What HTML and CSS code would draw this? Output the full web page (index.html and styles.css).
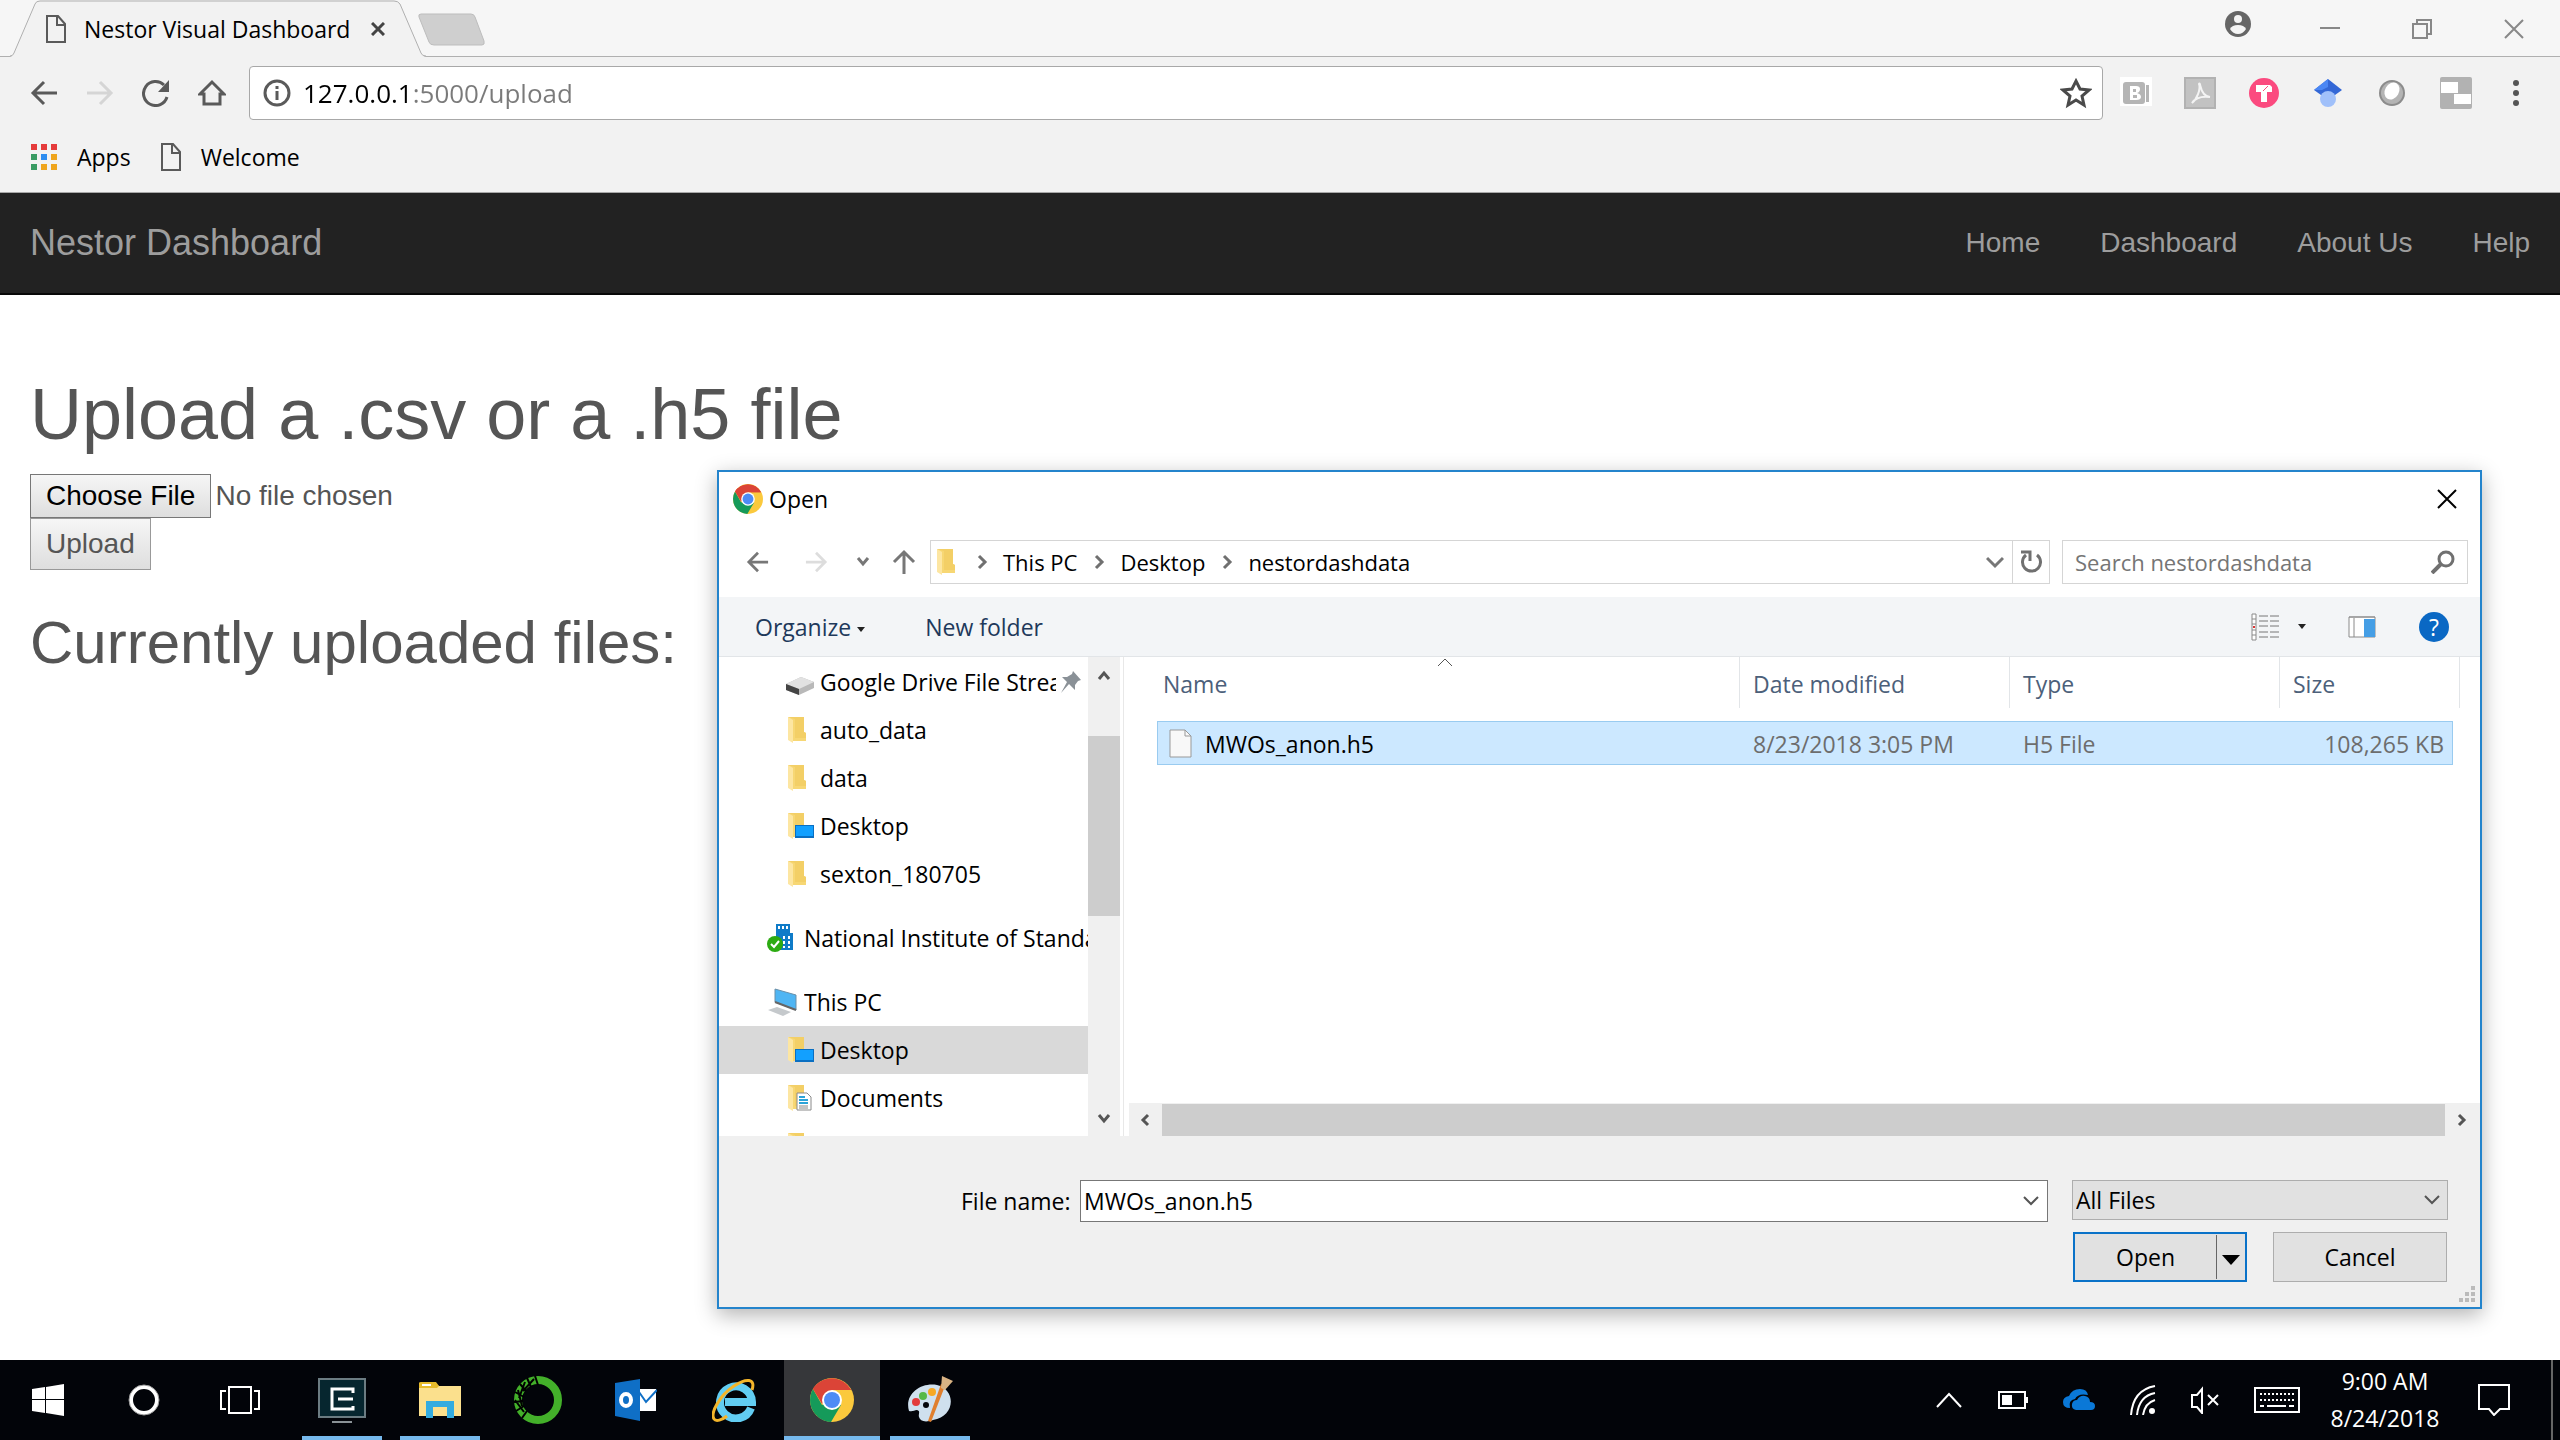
FILE: index.html
```html
<!DOCTYPE html>
<html lang="en">
<head>
  <meta charset="utf-8">
  <title>Nestor Visual Dashboard</title>
  <link rel="stylesheet" href="styles.css">
</head>
<body>
  <!-- shared icons -->
  <svg class="sprite" aria-hidden="true">
    <symbol id="doc" viewBox="0 0 20 28">
      <path d="M1 1h11l7 8v18H1zM11 1v9h8" fill="none" stroke="#5a5a5a" stroke-width="2"/>
    </symbol>
    <symbol id="folder" viewBox="0 0 28 28">
      <path d="M2 1h16v15l2 1v8H6z" fill="#f7d774"/>
      <path d="M2 1h16v15l2 1v5H9V3z" fill="#f3cf66"/>
      <path d="M2 1l5 3v23l-5-3z" fill="#fde6a2"/>
    </symbol>
    <symbol id="folder-desktop" viewBox="0 0 28 28">
      <use href="#folder"/>
      <path d="M9 13h19v13H9z" fill="#0a6fc2"/>
      <path d="M10 14h17v10H10z" fill="#12a0ff"/>
    </symbol>
    <symbol id="chrome" viewBox="0 0 44 44">
      <circle cx="22" cy="22" r="22" fill="#fbc93d"/>
      <path d="M22 22L3 11A22 22 0 0 1 41 12H22z" fill="#db4437"/>
      <path d="M3 11A22 22 0 0 0 21 44L31 27 22 22 12 27z" fill="#159a5a"/>
      <path d="M3 11A22 22 0 0 1 41 12H22L12 26z" fill="#db4437"/>
      <circle cx="22" cy="22" r="10" fill="#fff"/>
      <circle cx="22" cy="22" r="8" fill="#4d8bf5"/>
    </symbol>
    <symbol id="chev" viewBox="0 0 12 16">
      <path d="M2 2l6 6-6 6" fill="none" stroke="#707070" stroke-width="3"/>
    </symbol>
    <symbol id="arrow" viewBox="0 0 24 24">
      <path d="M23 12H3M12 2L2 12l10 10" fill="none" stroke="currentColor" stroke-width="3"/>
    </symbol>
    <symbol id="combo" viewBox="0 0 16 16">
      <path d="M1 4l7 7 7-7" fill="none" stroke="#555" stroke-width="2"/>
    </symbol>
    <symbol id="cross" viewBox="0 0 20 20">
      <path d="M1 1l18 18M19 1L1 19" fill="none" stroke="currentColor" stroke-width="2"/>
    </symbol>
  </svg>

  <!-- browser window -->
  <header class="browser">
    <div class="tabstrip">
      <div class="tab">
        <svg class="tab-shape" viewBox="0 0 416 57"><path d="M0 57Q3 56 4 53L25 4Q26 0 30 0H384Q388 0 390 4L411 53Q412 56 416 57z" fill="#f2f2f2"/><path d="M0 56Q3 56 4 53L25 4Q26 1 30 1H384Q388 1 390 4L411 53Q412 56 416 56" fill="none" stroke="#b0b0b0"/></svg>
        <svg class="doc-icon"><use href="#doc"/></svg>
        <span class="tab-title">Nestor Visual Dashboard</span>
        <button class="tab-close" aria-label="Close tab"><svg width="14" height="14" viewBox="0 0 14 14"><path d="M1 1l12 12M13 1L1 13" stroke="#444" stroke-width="3"/></svg></button>
      </div>
      <button class="new-tab" aria-label="New tab"><svg width="68" height="34" viewBox="0 0 68 34"><path d="M3 1h50q3 0 4 3l9 24q1 4-2 4H16q-4 0-5-3L1 4q-1-3 2-3z" fill="#cfcfcf" stroke="#bdbdbd"/></svg></button>
      <div class="window-buttons">
        <button aria-label="Profile"><svg width="26" height="26" viewBox="0 0 26 26"><circle cx="13" cy="13" r="13" fill="#666"/><circle cx="13" cy="8" r="4" fill="#f5f5f5"/><path d="M5 18q2-4 8-4t8 4q-3 5-8 5t-8-5z" fill="#f5f5f5"/></svg></button>
        <button aria-label="Minimize"><svg width="20" height="20" viewBox="0 0 20 20"><path d="M0 9h20" stroke="#888" stroke-width="2"/></svg></button>
        <button aria-label="Restore"><svg width="20" height="20" viewBox="0 0 20 20"><path d="M1 5h14v14H1zM5 5V1h14v14h-4" fill="none" stroke="#888" stroke-width="2"/></svg></button>
        <button class="window-close" aria-label="Close"><svg width="20" height="20"><use href="#cross"/></svg></button>
      </div>
    </div>

    <div class="toolbar">
      <button aria-label="Back"><svg width="28" height="26" viewBox="0 0 28 26"><path d="M27 13H3M14 2L3 13l11 11" fill="none" stroke="#5a5a5a" stroke-width="3"/></svg></button>
      <button aria-label="Forward"><svg width="28" height="26" viewBox="0 0 28 26"><path d="M1 13h24M14 2l11 11-11 11" fill="none" stroke="#d5d5d5" stroke-width="3"/></svg></button>
      <button aria-label="Reload"><svg width="28" height="28" viewBox="0 0 28 28"><path d="M25 18A12 12 0 1 1 22 6" fill="none" stroke="#5a5a5a" stroke-width="3"/><path d="M27 1v12H16z" fill="#5a5a5a"/></svg></button>
      <button aria-label="Home"><svg width="28" height="28" viewBox="0 0 28 28"><path d="M2 15L14 3l12 12h-4v10H6V15z" fill="none" stroke="#5a5a5a" stroke-width="3"/></svg></button>
      <div class="omnibox">
        <svg width="28" height="28" viewBox="0 0 28 28"><circle cx="14" cy="14" r="12" fill="none" stroke="#5a5a5a" stroke-width="3"/><path d="M14 12v9M14 7v3" stroke="#5a5a5a" stroke-width="3"/></svg>
        <input class="url" type="text" value="127.0.0.1:5000/upload" aria-label="Address">
        <svg width="32" height="32" viewBox="0 0 32 32"><path d="M16 4l4 8 9 1-7 6 2 9-8-5-8 5 2-9-7-6 9-1z" fill="none" stroke="#4a4a4a" stroke-width="3"/></svg>
      </div>
      <div class="extensions">
        <svg width="32" height="32" viewBox="0 0 32 32"><path d="M0 0h32v29H0z" fill="#fff"/><rect x="3" y="5" width="22" height="22" rx="3" fill="#b5b5b5"/><path d="M26 8h3v17h-3" fill="#b5b5b5"/><path d="M10 9h6q4 0 4 3t-3 4q4 1 4 4 0 3-5 3h-6zM13 12v3h3v-3zM13 18v3h4v-3z" fill="#fff" fill-rule="evenodd"/></svg>
        <svg width="32" height="32" viewBox="0 0 32 32"><path d="M1 1h30v30H1z" fill="#c2c2c2" stroke="#b2b2b2" stroke-width="2"/><path d="M8 26C13 22 17 12 15 7c2-3 0 12 11 13-8-1-14 0-18 6z" fill="none" stroke="#f4f4f4" stroke-width="2"/></svg>
        <svg width="32" height="32" viewBox="0 0 32 32"><circle cx="16" cy="16" r="15" fill="#fb4a7f"/><path d="M8 8h14l2 2v5h-5v10h-6V15H8z" fill="#fff"/><path d="M15 14l5-5" stroke="#fb4a7f"/></svg>
        <svg width="32" height="32" viewBox="0 0 32 32"><path d="M16 2l14 11-7 5H9l-7-5z" fill="#3367d6"/><path d="M16 2L2 13h8l6-3z" fill="#4b87f4"/><circle cx="16" cy="22" r="8" fill="#a0c0fa"/></svg>
        <svg width="32" height="32" viewBox="0 0 32 32"><circle cx="16" cy="16" r="13" fill="#8c8c8c"/><circle cx="16" cy="16" r="11" fill="#b4b4b4"/><ellipse cx="16" cy="14" rx="7" ry="9" fill="#fff" transform="rotate(30 16 14)"/></svg>
        <svg width="32" height="32" viewBox="0 0 32 32"><rect width="32" height="32" rx="2" fill="#b2b2b2"/><path d="M1 5h17v11H1zM14 17h17v10H14z" fill="#fff"/></svg>
        <svg width="8" height="28" viewBox="0 0 8 28"><circle cx="4" cy="4" r="3" fill="#555"/><circle cx="4" cy="14" r="3" fill="#555"/><circle cx="4" cy="24" r="3" fill="#555"/></svg>
      </div>
    </div>

    <nav class="bookmarks">
      <a href="#"><svg width="26" height="26" viewBox="0 0 26 26"><path d="M0 0h6v6H0zM10 0h6v6h-6zM20 0h6v6h-6z" fill="#e53c3c"/><path d="M0 10h6v6H0zM0 20h6v6H0z" fill="#3a9b63"/><path d="M10 10h6v6h-6z" fill="#2e8df0"/><path d="M20 10h6v6h-6zM10 20h6v6h-6zM20 20h6v6h-6z" fill="#efa51d"/></svg>Apps</a>
      <a href="#"><svg class="doc-icon"><use href="#doc"/></svg>Welcome</a>
    </nav>
  </header>

  <!-- nestor page -->
  <nav class="navbar">
    <a class="brand" href="#">Nestor Dashboard</a>
    <div class="nav-links">
      <a href="#">Home</a>
      <a href="#">Dashboard</a>
      <a href="#">About Us</a>
      <a href="#">Help</a>
    </div>
  </nav>

  <main class="page">
    <h1>Upload a .csv or a .h5 file</h1>
    <form>
      <input class="file-input" type="file" aria-label="File to upload">
      <button class="upload" type="button">Upload</button>
    </form>
    <h2>Currently uploaded files:</h2>
  </main>

  <!-- file picker -->
  <section class="dialog" role="dialog" aria-label="Open">
    <div class="dialog-title">
      <svg width="30" height="30"><use href="#chrome"/></svg>
      <span>Open</span>
      <button aria-label="Close"><svg width="20" height="20"><use href="#cross"/></svg></button>
    </div>

    <div class="dialog-nav">
      <div class="history">
        <button aria-label="Back"><svg width="24" height="22"><use href="#arrow"/></svg></button>
        <button class="off" aria-label="Forward"><svg class="flip" width="24" height="22"><use href="#arrow"/></svg></button>
        <button class="recent" aria-label="Recent"><svg width="14" height="12" viewBox="0 0 14 12"><path d="M2 2l5 6 5-6" fill="none" stroke="#777" stroke-width="3"/></svg></button>
        <button aria-label="Up"><svg width="24" height="26" viewBox="0 0 24 26"><path d="M12 25V3M2 13L12 3l10 10" fill="none" stroke="#777" stroke-width="3"/></svg></button>
      </div>
      <div class="address">
        <svg width="28" height="28"><use href="#folder"/></svg>
        <svg class="sep" width="12" height="16"><use href="#chev"/></svg>
        <a href="#">This PC</a>
        <svg class="sep" width="12" height="16"><use href="#chev"/></svg>
        <a href="#">Desktop</a>
        <svg class="sep" width="12" height="16"><use href="#chev"/></svg>
        <a href="#">nestordashdata</a>
        <button class="drop" aria-label="Previous locations"><svg width="18" height="14" viewBox="0 0 18 14"><path d="M1 3l8 8 8-8" fill="none" stroke="#777" stroke-width="3"/></svg></button>
        <button class="refresh" aria-label="Refresh"><svg width="22" height="24" viewBox="0 0 22 24"><path d="M17 5A9 9 0 1 1 6 5" fill="none" stroke="#707070" stroke-width="3"/><path d="M1 2h9v9" fill="none" stroke="#707070" stroke-width="3"/></svg></button>
      </div>
      <div class="search">
        <input type="text" placeholder="Search nestordashdata" aria-label="Search nestordashdata">
        <svg width="24" height="24" viewBox="0 0 24 24"><circle cx="15" cy="9" r="7" fill="none" stroke="#707070" stroke-width="3"/><path d="M10 14l-9 9" stroke="#707070" stroke-width="4"/></svg>
      </div>
    </div>

    <div class="commands">
      <button>Organize <i class="tri"></i></button>
      <button>New folder</button>
      <button class="view" aria-label="Change view"><svg width="28" height="28" viewBox="0 0 28 28"><path d="M1 1h4v26H1zM1 6h4M1 11h4M1 17h4M1 22h4" fill="#fff" stroke="#8a8a8a"/><path d="M8 3h9M19 3h9M8 8h9M19 8h9M8 13h9M19 13h9M8 19h9M19 19h9M8 24h9M19 24h9" stroke="#777"/><path d="M2 13h2v2H2z" fill="#d33"/></svg><i class="tri"></i></button>
      <button aria-label="Preview pane"><svg width="28" height="22" viewBox="0 0 28 22"><path d="M1 1h26v20H1z" fill="#fff" stroke="#8a8a8a"/><path d="M1 1h26M6 2v19" stroke="#8a8a8a"/><path d="M16 3h11v18H16z" fill="#459ee5"/></svg></button>
      <button class="help" aria-label="Help">?</button>
    </div>

    <div class="dialog-body">
      <div class="tree">
        <ul>
          <li class="pinned"><svg width="28" height="28" viewBox="0 0 28 28"><path d="M0 16l15-7 13 5v6l-15 7-13-5z" fill="#b9b9b9"/><path d="M0 16l15-7 13 5-15 7z" fill="#e2e2e2"/><path d="M0 16l13 5v6L0 22z" fill="#444"/></svg><span>Google Drive File Stream</span><svg class="pin" width="22" height="22" viewBox="0 0 22 22"><path d="M13 0l8 9-3 1-3 4v5l-6-6-8 9 6-11-5-5h5l5-3z" fill="#8a9197"/></svg></li>
          <li><svg width="28" height="28"><use href="#folder"/></svg><span>auto_data</span></li>
          <li><svg width="28" height="28"><use href="#folder"/></svg><span>data</span></li>
          <li><svg width="28" height="28"><use href="#folder-desktop"/></svg><span>Desktop</span></li>
          <li><svg width="28" height="28"><use href="#folder"/></svg><span>sexton_180705</span></li>
          <li class="root"><svg width="28" height="28" viewBox="0 0 28 28"><path d="M9 0h14v9h3v17H12V14H9z" fill="#0f7bc8"/><path d="M12 2v5M16 2v5M20 2v5M17 12v12M22 12v12" stroke="#fff" stroke-width="2" stroke-dasharray="3 2"/><circle cx="8" cy="20" r="8" fill="#2cab12"/><path d="M4 20l3 3 5-6" fill="none" stroke="#fff" stroke-width="2"/></svg><span>National Institute of Standards</span></li>
          <li class="root"><svg width="30" height="28" viewBox="0 0 30 28"><path d="M8 1l21 6v15L8 14z" fill="#4fb5f3" stroke="#6a8fa8"/><path d="M8 14l21 8" stroke="#666" stroke-width="2"/><path d="M1 22l9-3 14 5-8 4z" fill="#c5c9cc"/></svg><span>This PC</span></li>
          <li class="selected"><svg width="28" height="28"><use href="#folder-desktop"/></svg><span>Desktop</span></li>
          <li><svg width="28" height="28" viewBox="0 0 28 28"><use href="#folder"/><path d="M11 9h10l4 4v13H11z" fill="#fff" stroke="#8a8a8a"/><path d="M13 13h6M13 16h9M13 19h9" stroke="#2ba3d8" stroke-width="2"/><path d="M13 22h9M13 24h9" stroke="#888"/></svg><span>Documents</span></li>
          <li><svg width="28" height="28"><use href="#folder"/></svg></li>
        </ul>
        <div class="vscroll">
          <svg width="14" height="12" viewBox="0 0 14 12"><path d="M2 9l5-6 5 6" fill="none" stroke="#555" stroke-width="3"/></svg>
          <div class="vthumb"></div>
          <svg width="14" height="12" viewBox="0 0 14 12"><path d="M2 3l5 6 5-6" fill="none" stroke="#555" stroke-width="3"/></svg>
        </div>
      </div>

      <div class="files">
        <svg class="sort" width="16" height="9" viewBox="0 0 16 9"><path d="M1 8l7-7 7 7" fill="none" stroke="#555"/></svg>
        <table>
          <colgroup><col><col class="c-date"><col class="c-type"><col class="c-size"></colgroup>
          <thead>
            <tr><th>Name</th><th>Date modified</th><th>Type</th><th>Size</th></tr>
          </thead>
        </table>
        <table class="rows">
          <colgroup><col><col class="c-date"><col class="c-type"><col class="c-kb"></colgroup>
          <tbody>
            <tr>
              <td class="name"><svg width="24" height="30" viewBox="0 0 24 30"><path d="M1 1h15l6 6v21H1z" fill="#f8f8f8" stroke="#999"/><path d="M16 1v6h6" fill="none" stroke="#999"/></svg>MWOs_anon.h5</td>
              <td>8/23/2018 3:05 PM</td><td>H5 File</td><td class="num">108,265 KB</td>
            </tr>
          </tbody>
        </table>
        <div class="hscroll">
          <svg width="12" height="14" viewBox="0 0 12 14"><path d="M9 2L4 7l5 5" fill="none" stroke="#555" stroke-width="3"/></svg>
          <div class="hthumb"></div>
          <svg width="12" height="14" viewBox="0 0 12 14"><path d="M3 2l5 5-5 5" fill="none" stroke="#555" stroke-width="3"/></svg>
        </div>
      </div>
    </div>

    <div class="dialog-footer">
      <label for="file-name">File name:</label>
      <div class="combo">
        <input id="file-name" type="text" value="MWOs_anon.h5">
        <svg width="16" height="16"><use href="#combo"/></svg>
      </div>
      <div class="actions">
        <div class="select-wrap">
          <select aria-label="File type"><option>All Files</option></select>
          <svg width="16" height="16"><use href="#combo"/></svg>
        </div>
        <div class="buttons">
          <div class="open-split">
            <button class="open">Open</button>
            <button class="open-more" aria-label="Open options"><i></i></button>
          </div>
          <button class="cancel">Cancel</button>
        </div>
      </div>
      <svg class="grip" width="18" height="18" viewBox="0 0 18 18"><path d="M12 0h4v4h-4zM6 6h4v4H6zM12 6h4v4h-4zM0 12h4v4H0zM6 12h4v4H6zM12 12h4v4h-4z" fill="#bbb"/></svg>
    </div>
  </section>

  <!-- windows taskbar -->
  <footer class="taskbar">
    <div class="pinned-system">
      <button aria-label="Start"><svg width="32" height="32" viewBox="0 0 32 32"><path d="M0 5l13-2v12H0zM14 3l18-3v15H14zM0 16h13v13L0 27zM14 16h18v16l-18-3z" fill="#fff"/></svg></button>
      <button aria-label="Cortana"><svg width="32" height="32" viewBox="0 0 32 32"><circle cx="16" cy="16" r="13" fill="none" stroke="#fff" stroke-width="4"/><circle cx="16" cy="16" r="15" fill="none" stroke="#999"/></svg></button>
      <button aria-label="Task view"><svg width="40" height="28" viewBox="0 0 40 28"><path d="M9 1h22v26H9zM6 5H1v18h5M34 5h5v18h-5" fill="none" stroke="#fff" stroke-width="2"/></svg></button>
    </div>
    <div class="apps">
      <button class="running" aria-label="Remote desktop"><svg width="48" height="48" viewBox="0 0 48 48"><path d="M1 3h46v38H1z" fill="#06262f" stroke="#6b7c82" stroke-width="2"/><path d="M35 17v-4H14v20h21v-3M20 23h15" fill="none" stroke="#fff" stroke-width="3"/><path d="M14 46h20" stroke="#8a9296" stroke-width="2"/></svg></button>
      <button class="running" aria-label="File Explorer"><svg width="42" height="40" viewBox="0 0 42 40"><path d="M0 3h16l4 3h22v30H0z" fill="#fbe08d"/><path d="M0 3q0-1 2-1h15l3 4-2 2H0z" fill="#e7bb2b"/><path d="M3 4h9v2H3z" fill="#fff"/><path d="M7 21h28v17h-7V27H14v11H7z" fill="#33ace0"/></svg></button>
      <button aria-label="Anaconda"><svg width="48" height="48" viewBox="0 0 48 48"><circle cx="24" cy="24" r="20" fill="none" stroke="#43b02a" stroke-width="8"/><path d="M21 0l3 9M13 2l4 9M6 8l6 7M1 16l9 5M0 26l9-1M2 35l8-5M8 42l5-7M20 3L9 15M11 6L5 22M4 14l4 16M1 24l9 12" stroke="#000" stroke-width="2"/></svg></button>
      <button aria-label="Outlook"><svg width="42" height="42" viewBox="0 0 42 42"><path d="M22 10h19v22H22z" fill="#fff"/><path d="M24 13l7 10 11-12" fill="none" stroke="#0f6fc6" stroke-width="2"/><path d="M0 4l25-4v42L0 37z" fill="#0f6fc6"/><ellipse cx="11" cy="21" rx="5" ry="6" fill="none" stroke="#fff" stroke-width="4"/></svg></button>
      <button aria-label="Internet Explorer"><svg width="44" height="44" viewBox="0 0 44 44"><path d="M39 30A16 16 0 1 1 40 24H13" fill="none" stroke="#62cdf2" stroke-width="8"/><path d="M40 12C44 0 34 0 22 8 8 17-2 35 2 41c2 3 8 1 13-3" fill="none" stroke="#f4b52a" stroke-width="3"/></svg></button>
      <button class="running active" aria-label="Chrome"><svg width="44" height="44"><use href="#chrome"/></svg></button>
      <button class="running" aria-label="Paint"><svg width="48" height="48" viewBox="0 0 48 48"><path d="M3 35C-2 18 15 6 31 9c20 5 18 32-4 35-8 3-13 1-14-3-1-3 2-6-2-7-3 0-4 2-8 1z" fill="#cfe0ee"/><circle cx="10" cy="26" r="4" fill="#e23b3b"/><circle cx="17" cy="20" r="4" fill="#57b947"/><circle cx="26" cy="16" r="4" fill="#f7a823"/><circle cx="20" cy="29" r="3" fill="#05060a"/><path d="M39 10L25 46l-3-1 13-37z" fill="#e07f2e"/><path d="M36 0l11 5-8 9-4-2z" fill="#d9b383"/></svg></button>
    </div>
    <div class="tray">
      <svg width="28" height="20" viewBox="0 0 28 20"><path d="M2 17L14 4l12 13" fill="none" stroke="#fff" stroke-width="2"/></svg>
      <svg width="30" height="20" viewBox="0 0 30 20"><path d="M1 2h26v16H1z" fill="none" stroke="#fff" stroke-width="2"/><path d="M4 5h10v10H4zM28 7h2v6h-2z" fill="#fff"/></svg>
      <svg width="32" height="22" viewBox="0 0 32 22"><path d="M7 19Q0 19 0 13q0-5 6-6Q9 0 17 0q7 0 8 6-10-2-13 4-7 1-5 9z" fill="#0a78d7"/><path d="M13 21q-5-1-4-6 1-4 5-4 3-5 8-4 5 1 5 6 5 0 5 4t-4 4z" fill="#0a78d7"/></svg>
      <svg width="26" height="30" viewBox="0 0 26 30"><path d="M1 30Q3 5 25 1M7 30Q9 11 25 8M13 30Q15 18 25 15" fill="none" stroke="#fff" stroke-width="2"/><circle cx="22" cy="26" r="3" fill="#fff"/></svg>
      <svg width="28" height="28" viewBox="0 0 28 28"><path d="M1 9h5l5-6v24l-5-6H1zM17 9l10 10M27 9L17 19" fill="none" stroke="#fff" stroke-width="2"/></svg>
      <svg width="46" height="26" viewBox="0 0 46 26"><path d="M1 1h44v24H1z" fill="none" stroke="#fff" stroke-width="2"/><path d="M6 7h34M6 13h34" stroke="#fff" stroke-width="2" stroke-dasharray="2 2"/><path d="M6 19h4M13 19h19M35 19h5" stroke="#fff" stroke-width="2"/></svg>
      <div class="clock"><span>9:00 AM</span><span>8/24/2018</span></div>
      <svg width="32" height="32" viewBox="0 0 32 32"><path d="M1 1h30v24h-9l-6 6-5-6H1z" fill="none" stroke="#fff" stroke-width="2"/></svg>
      <div class="show-desktop"></div>
    </div>
  </footer>
</body>
</html>
```
FILE: styles.css
```css
* {
  box-sizing: border-box;
}

body {
  margin: 0;
  min-height: 100vh;
  display: flex;
  flex-direction: column;
  position: relative;
  background: #fff;
  color: #000;
  font-family: "Open Sans", "Noto Sans", sans-serif;
  font-size: 23px;
}

svg {
  display: block;
  flex: none;
}

button {
  margin: 0;
  padding: 0;
  border: 0;
  background: none;
  color: inherit;
  font: inherit;
}

input,
select {
  font: inherit;
  border: 0;
  outline: 0;
  border-radius: 0;
}

a {
  color: inherit;
  text-decoration: none;
}

.sprite {
  position: absolute;
  width: 0;
  height: 0;
}

/* browser chrome */
.browser {
  background: #f2f2f2;
  border-bottom: 1px solid #a8a8a8;
}

.tabstrip {
  display: flex;
  align-items: center;
  height: 57px;
  padding-left: 10px;
  background: #f6f6f6;
  box-shadow: inset 0 -1px #b0b0b0;
}

.tab {
  position: relative;
  display: flex;
  align-items: center;
  width: 413px;
  height: 57px;
  padding: 0 38px 0 36px;
}

.tab > * {
  position: relative;
}

.tab .tab-shape {
  position: absolute;
  left: 0;
  top: 0;
  width: 416px;
  height: 57px;
}

.doc-icon {
  width: 20px;
  height: 28px;
}

.tab-title {
  margin-left: 18px;
  flex: 1;
  white-space: nowrap;
}

.new-tab {
  margin: 2px 0 0 -5px;
}

.window-buttons {
  display: flex;
  margin-left: auto;
  margin-right: 36px;
  gap: 72px;
  align-items: center;
  color: #888;
}

.window-buttons button:first-child {
  margin: 0 -3px 10px 0;
}

.toolbar {
  display: flex;
  align-items: center;
  gap: 28px;
  height: 72px;
  padding: 0 40px 0 30px;
}

.omnibox {
  flex: 1;
  display: flex;
  align-items: center;
  gap: 12px;
  height: 54px;
  margin-left: -5px;
  padding: 0 10px 0 13px;
  background: #fff;
  border: 1px solid #a8a8a8;
  border-radius: 4px;
}

/* host part is black, the rest grey */
.url {
  flex: 1;
  height: 50px;
  padding: 0;
  font-size: 26px;
  background: linear-gradient(to right, #000 108px, #7a7a7a 108px);
  background-clip: text;
  -webkit-background-clip: text;
  -webkit-text-fill-color: transparent;
}

.extensions {
  display: flex;
  align-items: center;
  gap: 32px;
  margin-left: -11px;
}

.extensions svg:last-child {
  margin-left: 8px;
}

.bookmarks {
  display: flex;
  align-items: center;
  gap: 30px;
  height: 63px;
  padding: 0 31px 8px;
}

.bookmarks a {
  display: flex;
  align-items: center;
  gap: 20px;
}

/* nestor page */
.navbar {
  display: flex;
  justify-content: space-between;
  align-items: center;
  height: 102px;
  padding: 0 30px;
  background: #222;
  border-bottom: 2px solid #080808;
  color: #9d9d9d;
  font: 28px "Liberation Sans", Arial, sans-serif;
}

.brand {
  font-size: 36px;
}

.nav-links {
  display: flex;
  gap: 60px;
}

.page {
  flex: 1;
  padding: 80px 30px 0;
  color: #555;
  font: 28px "Liberation Sans", Arial, sans-serif;
}

h1,
h2 {
  font-weight: 500;
}

h1 {
  margin: 0 0 20px;
  font-size: 72px;
  line-height: 79px;
}

h2 {
  margin: 40px 0 20px;
  font-size: 60px;
  line-height: 66px;
}

.file-input {
  display: block;
  height: 44px;
  padding: 0;
}

.file-input::file-selector-button,
.upload {
  height: 44px;
  padding: 0 15px;
  border: 1px solid #777;
  border-radius: 0;
  background: linear-gradient(#f6f6f6, #dedede);
  color: #000;
  font: inherit;
}

.upload {
  display: block;
  height: 52px;
  border-color: #999;
  color: #555;
}

/* file picker */
.dialog {
  position: absolute;
  left: 717px;
  right: 78px;
  top: 470px;
  background: #fff;
  border: 2px solid #2484cc;
  box-shadow: 0 6px 20px rgba(0, 0, 0, 0.3);
}

.dialog-title {
  display: flex;
  align-items: center;
  height: 54px;
  padding: 0 23px 0 14px;
  gap: 6px;
}

.dialog-title button {
  margin-left: auto;
}

.dialog-nav {
  display: flex;
  align-items: center;
  height: 71px;
  padding: 0 12px 0 27px;
}

.history {
  display: flex;
  align-items: center;
  gap: 34px;
  width: 184px;
  color: #777;
}

.history .off {
  color: #ddd;
}

.history .recent {
  margin: 0 -12px 0 -6px;
}

.flip {
  transform: scaleX(-1);
}

.address,
.search {
  display: flex;
  align-items: center;
  height: 44px;
  border: 1px solid #d5d5d5;
  font-size: 22px;
}

.address {
  flex: 1;
  padding-left: 4px;
}

.address .sep {
  margin: 0 14px;
}

.address a + .sep {
  margin-left: 17px;
}

.drop {
  margin-left: auto;
  margin-right: 8px;
}

.refresh {
  display: flex;
  align-items: center;
  height: 42px;
  padding: 0 7px;
  border-left: 1px solid #d5d5d5;
}

.search {
  width: 406px;
  margin-left: 12px;
  padding: 0 12px;
}

.search input {
  flex: 1;
  min-width: 0;
  padding: 0;
  background: none;
}

.search input::placeholder {
  color: #757575;
}

.commands {
  display: flex;
  align-items: center;
  height: 60px;
  padding: 0 31px 0 36px;
  background: #f3f5f7;
  border-bottom: 1px solid #e2e5e8;
  color: #1e395b;
}

.commands button + button {
  margin-left: 60px;
}

.tri {
  display: inline-block;
  vertical-align: middle;
  border: 4px solid transparent;
  border-top: 5px solid #222;
  border-bottom: 0;
}

.commands .view {
  display: flex;
  align-items: center;
  gap: 19px;
  margin-left: auto;
}

.commands .view + button {
  margin-left: 42px;
}

.commands .help {
  width: 30px;
  height: 30px;
  margin-left: 43px;
  border-radius: 50%;
  background: #0a68c4;
  color: #fff;
  line-height: 30px;
}

.dialog-body {
  display: flex;
  height: 479px;
}

.tree {
  display: flex;
  width: 405px;
  border-right: 1px solid #e8e8e8;
}

.tree ul {
  width: 369px;
  margin: 0;
  padding: 1px 0 0;
  overflow: hidden;
  list-style: none;
}

.tree li {
  display: flex;
  align-items: center;
  gap: 6px;
  height: 48px;
  padding-left: 67px;
}

.tree li span {
  overflow: hidden;
  white-space: nowrap;
}

.tree .root {
  margin: 16px 0;
  padding-left: 48px;
  gap: 9px;
}

.tree .root + .root {
  margin-bottom: 0;
}

.tree .root + .root svg {
  margin-right: -2px;
}

.tree .selected {
  background: #d9d9d9;
}

.pinned .pin {
  margin: 0 6px 0 -2px;
}

.vscroll {
  display: flex;
  flex-direction: column;
  align-items: center;
  width: 32px;
  padding: 13px 0 12px;
  background: #f0f0f0;
}

.vthumb {
  width: 32px;
  height: 180px;
  margin: 54px 0 auto;
  background: #cdcdcd;
}

.files {
  position: relative;
  flex: 1;
  display: flex;
  flex-direction: column;
  padding-left: 5px;
}

.sort {
  position: absolute;
  left: 313px;
  top: 1px;
}

.files table {
  width: calc(100% - 20px);
  table-layout: fixed;
  border-collapse: collapse;
}

.files th {
  height: 51px;
  padding: 2px 0 0 13px;
  border-right: 1px solid #e2e5e8;
  color: #4c607a;
  font-weight: 400;
  text-align: left;
}

.files th:first-child {
  padding-left: 34px;
}

.c-date,
.c-type {
  width: 270px;
}

.c-size {
  width: 180px;
}

.c-kb {
  width: 173px;
}

.files .rows {
  width: auto;
  margin: 13px 27px 0 28px;
  background: #cce8ff;
  outline: 1px solid #99cbf0;
  outline-offset: -1px;
}

.rows td {
  height: 44px;
  padding: 2px 0 0 13px;
  color: #6d6d6d;
  white-space: nowrap;
}

.rows .name {
  display: flex;
  align-items: center;
  gap: 12px;
  padding-left: 12px;
  color: #000;
}

.rows .num {
  padding-left: 0;
  padding-right: 9px;
  text-align: right;
}

.hscroll {
  display: flex;
  align-items: center;
  gap: 11px;
  height: 33px;
  margin-top: auto;
  padding: 0 12px 0 10px;
  background: #f0f0f0;
}

.hthumb {
  flex: 1;
  height: 32px;
  background: #cdcdcd;
}

.dialog-footer {
  position: relative;
  display: flex;
  align-items: flex-start;
  height: 171px;
  padding: 44px 32px 0 242px;
  background: #f0f0f0;
}

.dialog-footer label {
  width: 119px;
  line-height: 42px;
}

.combo {
  flex: 1;
  display: flex;
  align-items: center;
  height: 42px;
  padding-right: 8px;
  border: 1px solid #777;
  background: #fff;
}

.combo input {
  flex: 1;
  padding: 0 3px;
  background: none;
}

.actions {
  width: 376px;
  margin-left: 24px;
}

.select-wrap {
  position: relative;
}

.select-wrap select {
  width: 100%;
  height: 40px;
  padding: 0 3px;
  appearance: none;
  background: #e1e1e1;
  border: 1px solid #adadad;
  color: #000;
}

.select-wrap svg {
  position: absolute;
  right: 8px;
  top: 12px;
}

.buttons {
  display: flex;
  justify-content: space-between;
  margin-top: 12px;
  padding: 0 1px;
}

.open-split {
  display: flex;
  align-items: center;
  width: 174px;
  height: 50px;
  border: 2px solid #0a72c8;
  background: #e1e1e1;
}

.open {
  flex: 1;
}

.open-more {
  width: 29px;
  height: 44px;
  border-left: 1px solid #666;
}

.open-more i {
  display: inline-block;
  vertical-align: middle;
  border: 9px solid transparent;
  border-top: 10px solid #000;
  border-bottom: 0;
}

.cancel {
  width: 174px;
  height: 50px;
  border: 1px solid #adadad;
  background: #e1e1e1;
}

.grip {
  position: absolute;
  right: 3px;
  bottom: 3px;
}

/* taskbar */
.taskbar {
  display: flex;
  height: 80px;
  background: #020409;
  color: #fff;
}

.pinned-system,
.apps {
  display: flex;
}

.taskbar button {
  display: flex;
  align-items: center;
  justify-content: center;
  width: 96px;
  height: 80px;
}

.apps {
  gap: 2px;
  margin-left: 6px;
}

.taskbar .running {
  position: relative;
}

.running::after {
  content: "";
  position: absolute;
  left: 8px;
  right: 8px;
  bottom: 0;
  height: 4px;
  background: #76b9ed;
}

.taskbar .active {
  background: #36373a;
}

.active::after {
  left: 0;
  right: 0;
}

.tray {
  display: flex;
  align-items: center;
  gap: 35px;
  margin-left: auto;
}

.clock {
  display: flex;
  flex-direction: column;
  width: 112px;
  margin: 0 2px 0 -6px;
  line-height: 37px;
  text-align: center;
}

.show-desktop {
  width: 9px;
  height: 80px;
  margin-left: 6px;
  border-left: 2px solid #666;
}
```
